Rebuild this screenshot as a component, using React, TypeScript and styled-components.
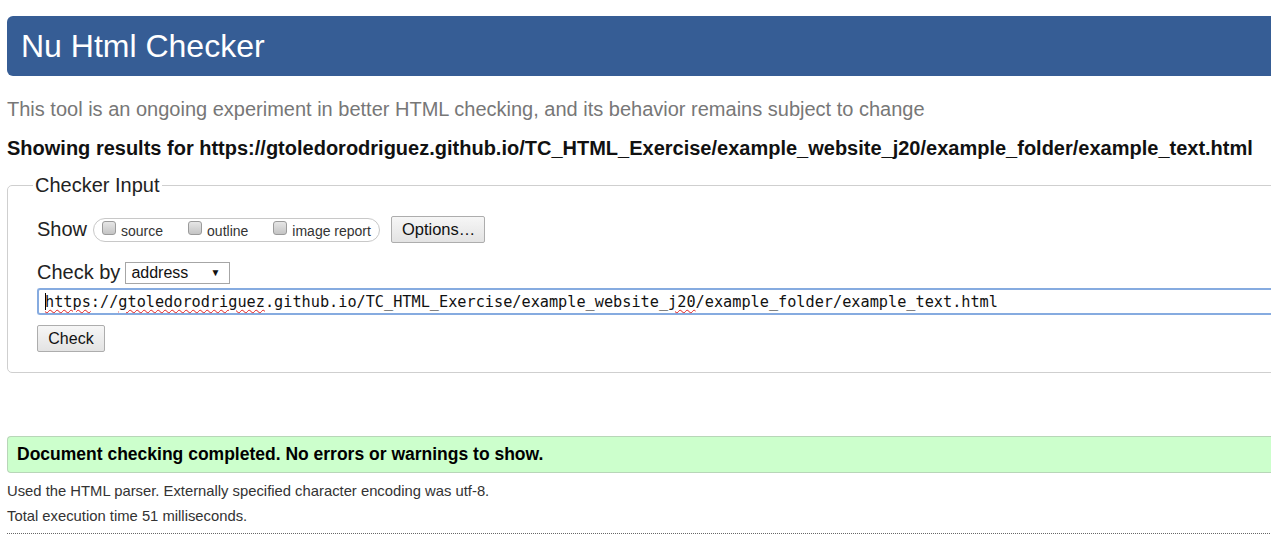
import React from 'react';
import styled, { createGlobalStyle } from 'styled-components';

const GlobalStyle = createGlobalStyle`
    html, body {
        margin: 0;
        padding: 0;
        background: #fff;
        overflow: hidden;
    }
    body {
        font-family: "Liberation Sans", Arial, sans-serif;
        color: #111;
    }
`;

const Page = styled.div`
    width: 1300px;
    padding: 16px 0 0 7px;
    box-sizing: border-box;
`;

const Header = styled.h1`
    margin: 0;
    height: 60px;
    line-height: 60px;
    padding-left: 14px;
    background: #365d95;
    color: #fff;
    font-size: 32px;
    font-weight: normal;
    border-radius: 6px 0 0 6px;
`;

const Tagline = styled.p`
    margin: 21px 0 0;
    font-size: 20px;
    line-height: 24px;
    color: #777;
`;

const ResultsFor = styled.p`
    margin: 16px 0 0;
    font-size: 20px;
    line-height: 22px;
    font-weight: bold;
    color: #111;
`;

const Fieldset = styled.fieldset`
    margin: 15px 0 0;
    padding: 0 0 20px 29px;
    border: 1px solid #cfcfcf;
    border-radius: 5px;
    min-width: 0;
`;

const Legend = styled.legend`
    margin-left: -4px;
    padding: 0 2px;
    font-size: 20px;
    line-height: 22px;
    color: #222;
`;

const Row = styled.div<{ $top: number }>`
    display: flex;
    align-items: center;
    margin-top: ${p => p.$top}px;
`;

const RowLabel = styled.span`
    font-size: 20px;
    color: #222;
    margin-right: 5px;
`;

const Pill = styled.div`
    display: flex;
    align-items: center;
    height: 24px;
    box-sizing: border-box;
    border: 1px solid #c8c8c8;
    border-radius: 12px;
    padding: 0 8px 0 8px;
    gap: 25px;
    margin-left: 1px;
`;

const Option = styled.label`
    display: flex;
    align-items: center;
    gap: 5px;
    font-size: 14px;
    color: #333;
    padding-top: 2px;
`;

const Box = styled.span`
    display: inline-block;
    width: 12px;
    height: 12px;
    margin-top: -6px;
    border: 1px solid #9b9b9b;
    border-radius: 3px;
    background: linear-gradient(#e6e6e6, #c4c4c4);
`;

const Button = styled.button`
    height: 27px;
    padding: 0 10px;
    font-family: "Liberation Sans", Arial, sans-serif;
    font-size: 16px;
    color: #111;
    border: 1px solid #adadad;
    border-radius: 2px;
    background: linear-gradient(#f6f6f6, #e3e3e3);
`;

const OptionsButton = styled(Button)`
    margin-left: 11px;
    width: 94px;
    height: 27px;
    font-size: 16.5px;
`;

const Select = styled.div`
    display: flex;
    align-items: center;
    justify-content: space-between;
    width: 105px;
    height: 22px;
    box-sizing: border-box;
    border: 1px solid #a6a6a6;
    padding: 0 9px 0 5px;
    font-size: 16px;
    color: #111;

    &::after {
        content: "▼";
        font-size: 10px;
    }
`;

const UrlField = styled.div`
    margin-top: 4px;
    height: 27px;
    box-sizing: border-box;
    border: 2px solid #86abe0;
    border-right: none;
    border-radius: 3px 0 0 3px;
    padding-left: 6px;
    display: flex;
    align-items: center;
    font-family: "DejaVu Sans Mono", "Liberation Mono", monospace;
    font-size: 15.22px;
    color: #111;
    white-space: pre;
`;

const Caret = styled.span`
    display: inline-block;
    width: 1px;
    height: 17px;
    background: #000;
    margin-right: -1px;
`;

const Misspelled = styled.span`
    text-decoration: underline wavy #e02020;
    text-decoration-thickness: 1px;
    text-underline-offset: 2px;
`;

const CheckButton = styled(Button)`
    margin-top: 10px;
    width: 68px;
    display: block;
`;

const Success = styled.div`
    margin-top: 63px;
    height: 37px;
    box-sizing: border-box;
    padding-left: 9px;
    display: flex;
    align-items: center;
    background: #ccffcc;
    border: 1px solid #b8d6b8;
    border-right: none;
    border-radius: 4px 0 0 4px;
    font-size: 17.5px;
    font-weight: bold;
    color: #000;
`;

const Note = styled.p<{ $top: number }>`
    margin: ${p => p.$top}px 0 0;
    font-size: 14.8px;
    line-height: 18px;
    color: #333;
`;

const Dotted = styled.hr`
    margin: 8px 0 0;
    border: none;
    border-top: 1px dotted #666;
`;

export default function App() {
    return (
        <>
            <GlobalStyle />
            <Page>
                <Header>Nu Html Checker</Header>
                <Tagline>
                    This tool is an ongoing experiment in better HTML checking, and its behavior remains subject to change
                </Tagline>
                <ResultsFor>
                    Showing results for https://gtoledorodriguez.github.io/TC_HTML_Exercise/example_website_j20/example_folder/example_text.html
                </ResultsFor>
                <Fieldset>
                    <Legend>Checker Input</Legend>
                    <Row $top={20}>
                        <RowLabel>Show</RowLabel>
                        <Pill>
                            <Option><Box />source</Option>
                            <Option><Box />outline</Option>
                            <Option><Box />image report</Option>
                        </Pill>
                        <OptionsButton>Options…</OptionsButton>
                    </Row>
                    <Row $top={18}>
                        <RowLabel>Check by</RowLabel>
                        <Select>address</Select>
                    </Row>
                    <UrlField>
                        <Caret />
                        <Misspelled>https</Misspelled>://<Misspelled>gtoledorodriguez</Misspelled>.github.io/TC_HTML_Exercise/example_website_<Misspelled>j20</Misspelled>/example_folder/example_text.html
                    </UrlField>
                    <CheckButton>Check</CheckButton>
                </Fieldset>
                <Success>Document checking completed. No errors or warnings to show.</Success>
                <Note $top={9}>Used the HTML parser. Externally specified character encoding was utf-8.</Note>
                <Note $top={7}>Total execution time 51 milliseconds.</Note>
                <Dotted />
            </Page>
        </>
    );
}
